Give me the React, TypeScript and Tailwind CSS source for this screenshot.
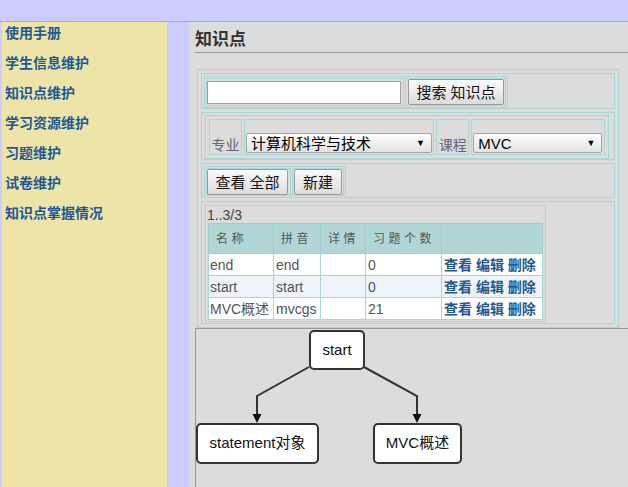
import React from "react";

const font = "font-['Liberation_Sans','Noto_Sans_CJK_SC',sans-serif]";

const menu = [
  "使用手册",
  "学生信息维护",
  "知识点维护",
  "学习资源维护",
  "习题维护",
  "试卷维护",
  "知识点掌握情况",
];

const rows = [
  { name: "end", py: "end", count: "0", bg: "bg-white" },
  { name: "start", py: "start", count: "0", bg: "bg-[#eef3fa]" },
  { name: "MVC概述", py: "mvcgs", count: "21", bg: "bg-white" },
];

function Btn({ children, w }: { children: React.ReactNode; w: string }) {
  return (
    <div
      role="button"
      className={`${w} h-[26px] flex items-center justify-center text-[15px] text-[#111] border border-[#9a9a9a] rounded-[2px] bg-[#ececec] bg-[linear-gradient(#fafafa,#dcdcdc)] leading-none cursor-default select-none`}
    >
      {children}
    </div>
  );
}

function FakeSelect({ text, w }: { text: string; w: string }) {
  return (
    <div
      className={`${w} h-[20px] flex items-center justify-between pl-[4px] pr-[6px] text-[15px] text-black border border-[#a5a5a5] rounded-[2px] bg-[linear-gradient(#fdfdfd,#e2e2e2)]`}
    >
      <span className="leading-none">{text}</span>
      <span className="text-[9px] leading-none">▼</span>
    </div>
  );
}

export default function App() {
  return (
    <div className={`h-[487px] overflow-hidden bg-[#ccccff] ${font}`}>
      <div className="h-[22px] border-b border-[#a9a9c9]" />
      <div className="flex h-[465px] pl-[2px]">
        {/* Sidebar */}
        <div className="w-[165px] bg-[#eee4a8] pt-[3px] pl-[3px]">
          {menu.map((m) => (
            <div
              key={m}
              className="leading-[16px] mb-[14px] text-[14px] font-bold text-[#1f5896]"
            >
              {m}
            </div>
          ))}
        </div>
        <div className="w-[22px]" />
        {/* Main */}
        <div className="flex-1 bg-[#dcdcdc] pl-[6px]">
          <div className="pt-[8px] pb-[2px] border-b border-[#9a9a9a]">
            <h1 className="text-[17px] leading-[20px] font-bold text-[#333]">知识点</h1>
          </div>

          <div className="mt-[16px] ml-[2px] w-[422px] border border-[#aad6d6] p-[3px] flex flex-col gap-[3px]">
            {/* Search row */}
            <div className="h-[36px] border border-[#aad6d6] pt-[2px] pl-[2px]">
              <div className="flex w-fit border border-[#aad6d6] p-px gap-px">
                <div className="w-[198px] h-[28px] border border-[#aad6d6] flex items-center">
                  <input className="w-[194px] h-[23px] bg-white border border-[#a0a0a0] outline-none" />
                </div>
                <div className="w-[101px] h-[28px] border border-[#aad6d6] flex items-center pl-[2px]">
                  <Btn w="w-[96px]">搜索 知识点</Btn>
                </div>
              </div>
            </div>

            {/* Filter row */}
            <div className="h-[48px] border border-[#aad6d6] pt-[2px] pl-[3px] pr-[3px]">
              <div className="flex border border-[#aad6d6] p-[3px] gap-[2px] w-[404px]">
                <div className="w-[33px] h-[36px] border border-[#aad6d6] flex items-end justify-center pb-[1px]">
                  <span className="text-[14px] leading-[16px] text-[#667]">专业</span>
                </div>
                <div className="w-[191px] h-[36px] border border-[#aad6d6] flex items-end pl-px pb-[1px]">
                  <FakeSelect text="计算机科学与技术" w="w-[186px]" />
                </div>
                <div className="w-[33px] h-[36px] border border-[#aad6d6] flex items-end justify-center pb-[1px]">
                  <span className="text-[14px] leading-[16px] text-[#667]">课程</span>
                </div>
                <div className="w-[134px] h-[36px] border border-[#aad6d6] flex items-end pl-px pb-[1px]">
                  <FakeSelect text="MVC" w="w-[129px]" />
                </div>
              </div>
            </div>

            {/* Buttons row */}
            <div className="h-[35px] border border-[#aad6d6] pt-[2px] pl-[2px]">
              <div className="flex w-fit border border-[#aad6d6] p-px gap-px">
                <div className="w-[85px] h-[28px] border border-[#aad6d6] flex items-center">
                  <Btn w="w-[81px]">查看 全部</Btn>
                </div>
                <div className="w-[52px] h-[28px] border border-[#aad6d6] flex items-center pl-px">
                  <Btn w="w-[48px]">新建</Btn>
                </div>
              </div>
            </div>

            {/* Results row */}
            <div className="h-[123px] border border-[#aad6d6] pt-[3px] pl-[3px]">
              <div className="w-fit border border-[#aad6d6] p-[2px] pb-[1px]">
                <div className="text-[14px] leading-[15px] text-[#444] -ml-px">1..3/3</div>
                <table className="border-collapse text-[14px] text-[#555]">
                  <thead>
                    <tr className="bg-[#b0d6d6] h-[30px]">
                      {[
                        ["名称", "w-[65px]"],
                        ["拼音", "w-[47px]"],
                        ["详情", "w-[45px]"],
                        ["习题个数", "w-[76px]"],
                        ["", "w-[101px]"],
                      ].map(([t, w]) => (
                        <th
                          key={w}
                          className={`${w} border border-[#a2cccc] text-left font-normal text-[12px] tracking-[3.5px] pl-[7px] text-[#555]`}
                        >
                          {t}
                        </th>
                      ))}
                    </tr>
                  </thead>
                  <tbody>
                    {rows.map((r) => (
                      <tr key={r.name} className={`${r.bg} h-[22px]`}>
                        <td className="border border-[#aad6d6] pl-[1px] leading-none">{r.name}</td>
                        <td className="border border-[#aad6d6] pl-[2px] leading-none">{r.py}</td>
                        <td className="border border-[#aad6d6]" />
                        <td className="border border-[#aad6d6] pl-[2px] leading-none">{r.count}</td>
                        <td className="border border-[#aad6d6] pl-[2px] leading-none font-bold text-[#1f5896] whitespace-nowrap">
                          查看 编辑 删除
                        </td>
                      </tr>
                    ))}
                  </tbody>
                </table>
              </div>
            </div>
          </div>

          {/* Graph panel */}
          <div className="relative h-[200px] border-l border-t border-[#999] bg-[#dcdcdc]">
            <svg className="absolute left-0 top-0" width="440" height="160">
              <polyline points="113,38 61,67 61,86" fill="none" stroke="#333" strokeWidth="2" />
              <polygon points="56.5,85 65.5,85 61,94" fill="#111" />
              <polyline points="168,38 221,67 221,86" fill="none" stroke="#333" strokeWidth="2" />
              <polygon points="216.5,85 225.5,85 221,94" fill="#111" />
            </svg>
            <div className="absolute left-[113px] top-[1px] w-[56px] h-[40px] bg-white border-2 border-[#333] rounded-[5px] flex items-center justify-center text-[15px] text-[#111]">
              start
            </div>
            <div className="absolute left-0 top-[94px] w-[123px] h-[41px] bg-white border-2 border-[#333] rounded-[5px] flex items-center justify-center text-[15px] text-[#111]">
              statement对象
            </div>
            <div className="absolute left-[177px] top-[94px] w-[89px] h-[41px] bg-white border-2 border-[#333] rounded-[5px] flex items-center justify-center text-[15px] text-[#111]">
              MVC概述
            </div>
          </div>
        </div>
      </div>
    </div>
  );
}
